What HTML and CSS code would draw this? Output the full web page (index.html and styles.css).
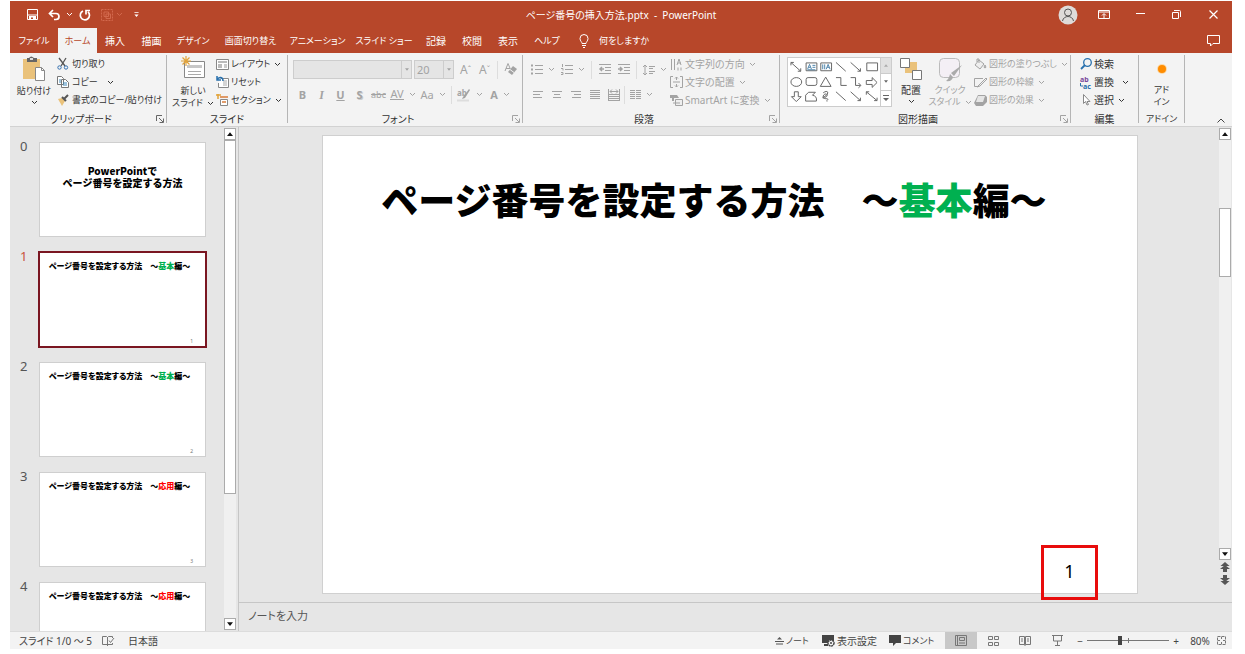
FILE: index.html
```html
<!DOCTYPE html>
<html lang="ja">
<head>
<meta charset="utf-8">
<meta name="viewport" content="width=device-width, initial-scale=1">
<title>ページ番号の挿入方法.pptx - PowerPoint</title>
<link rel="stylesheet" href="styles.css">
</head>
<body>
<svg class="defs" aria-hidden="true">
  <symbol id="chev" viewBox="0 0 7 5"><path d="M1 1l2.5 2.5L6 1" fill="none" stroke="currentColor"/></symbol>
  <symbol id="launch" viewBox="0 0 8 8"><path d="M.5 6V.5H6M3 3l4 4M7.500 3.500v4h-4" fill="none" stroke="currentColor"/></symbol>
  <symbol id="tri-up" viewBox="0 0 8 5"><path d="M0 5h8L4 0z" fill="currentColor"/></symbol>
  <symbol id="tri-down" viewBox="0 0 8 5"><path d="M0 0h8L4 5z" fill="currentColor"/></symbol>
</svg>
<div class="app">
  <header class="titlebar">
    <div class="quick">
      <button aria-label="上書き保存"><svg width="11" height="11" viewBox="0 0 11 11"><path d="M.5.5h10v10h-10zM1 6h9M3 10V8h5v2" fill="none" stroke="#fff"/><path d="M2 7h7v3H2z" fill="#fff"/><path d="M4 8.500h2V10H4z" fill="#b7472a"/></svg></button>
      <button aria-label="元に戻す"><svg width="13" height="12" viewBox="0 0 13 12"><path d="M5 1L1.500 4.500 5 8M2 4.500h6c4 0 4 6 0 6H6" fill="none" stroke="#fff" stroke-width="1.700"/></svg></button>
      <button aria-label="元に戻す一覧"><svg width="7" height="5"><use href="#chev"/></svg></button>
      <button class="wide" aria-label="繰り返し"><svg width="12" height="12" viewBox="0 0 12 12"><path d="M4 2a4.600 4.600 0 1 0 5 .8M7 5.500V1.500h4" fill="none" stroke="#fff" stroke-width="1.700"/></svg></button>
      <button class="dim" aria-label="グループ化"><svg width="12" height="12" viewBox="0 0 12 12"><path d="M.5.5h11v11H.5z" fill="none" stroke="currentColor" stroke-dasharray="2 1"/><path d="M3 3h4.500v4.500H3zM5 5h4.500v4.500H5z" fill="none" stroke="currentColor"/></svg></button>
      <button class="dim" aria-label="グループ一覧"><svg width="7" height="5"><use href="#chev"/></svg></button>
      <button class="wide" aria-label="カスタマイズ"><svg width="5" height="5" viewBox="0 0 5 6"><path d="M0 0h5v1H0zM0 3h5L2.500 6z" fill="#fff"/></svg></button>
    </div>
    <div class="doc-title">ページ番号の挿入方法.pptx&nbsp; -&nbsp; PowerPoint</div>
    <div class="window-buttons">
      <button aria-label="アカウント"><svg width="20" height="20" viewBox="0 0 20 20"><circle cx="10" cy="10" r="9.500" fill="#dedbd9"/><circle cx="10" cy="7.500" r="3.500" fill="none" stroke="#555"/><path d="M4.500 16c1-6 10-6 11 0" fill="none" stroke="#555"/></svg></button>
      <button aria-label="リボンの表示オプション"><svg width="12" height="9" viewBox="0 0 12 9"><path d="M.5.5h11v8H.5zM1 2h10M6 8V4M4 5.500l2-2 2 2" fill="none" stroke="#fff"/></svg></button>
      <button aria-label="最小化"><svg width="9" height="3"><path d="M0 .5h9" stroke="#fff"/></svg></button>
      <button aria-label="元のサイズに戻す"><svg width="9" height="9" viewBox="0 0 9 9"><path d="M.5 2.500h6v6h-6zM2 .5h5.500q1 0 1 1V7" fill="none" stroke="#fff"/></svg></button>
      <button aria-label="閉じる"><svg width="9" height="9" viewBox="0 0 9 9"><path d="M.5.5l8 8M8.500.5l-8 8" stroke="#fff" stroke-width="1.200"/></svg></button>
    </div>
  </header>
  <nav class="tabs">
    <button class="kana">ファイル</button><button class="active kana">ホーム</button><button>挿入</button><button>描画</button><button class="kana">デザイン</button><button class="kana">画面切り替え</button><button class="kana">アニメーション</button><button class="kana">スライド ショー</button><button>記録</button><button>校閲</button><button>表示</button><button class="kana">ヘルプ</button>
    <button class="tell kana"><svg width="10" height="14" viewBox="0 0 10 14"><path d="M3 9.500C3 8 1 7 1 4.500a4 4 0 0 1 8 0C9 7 7 8 7 9.500zM3 11.500h4M4 13.500h2" fill="none" stroke="#fff"/></svg>何をしますか</button>
    <button class="comment" aria-label="コメント"><svg width="13" height="12" viewBox="0 0 13 12"><path d="M.5.500h12v8H6L3.500 11V8.500h-3z" fill="none" stroke="#fff"/></svg></button>
  </nav>

  <section class="ribbon">
    <div class="group clipboard">
      <div class="body kana">
        <button class="big">
          <svg width="24" height="27" viewBox="0 0 24 27"><path d="M1 3h17v20H1z" fill="#eac27b"/><path d="M5 2h2q2-3 5 0h3v4H5z" fill="#666"/><path d="M8 2h3v2H8z" fill="#ddd"/><path d="M13.500 11.500h6l3 3v10h-9z" fill="#fff" stroke="#888"/><path d="M19.500 11.500v3h3" fill="none" stroke="#888"/></svg>
          <span>貼り付け</span><svg width="7" height="5"><use href="#chev"/></svg>
        </button>
        <div class="stack">
          <button><svg width="12" height="12" viewBox="0 0 12 12"><path d="M2 0l6 8M9 0L4 8" stroke="#555" stroke-width="1.300"/><circle cx="2.500" cy="9.500" r="1.700" fill="none" stroke="#3470b0"/><circle cx="9" cy="9.500" r="1.700" fill="none" stroke="#3470b0"/></svg>切り取り</button>
          <button><svg width="12" height="12" viewBox="0 0 12 12"><path d="M.5.500h4l2 2v6h-6zM4.500 3.500h4l3 3v5h-7z" fill="#fff" stroke="#777"/><path d="M6 7h4M6 9h4M2 4h2M2 6h2" stroke="#3d88bb"/></svg>コピー <svg class="gap-left" width="7" height="5"><use href="#chev"/></svg></button>
          <button><svg width="12" height="11" viewBox="0 0 12 11"><path d="M1 4l4-1 3 3-3 5z" fill="#eac27b"/><path d="M5 2l4 4M7 4l4-4" stroke="#555" stroke-width="2"/></svg>書式のコピー/貼り付け</button>
        </div>
      </div>
      <div class="caption">クリップボード<button aria-label="クリップボードの詳細"><svg width="8" height="8"><use href="#launch"/></svg></button></div>
    </div>

    <div class="group slides">
      <div class="body kana">
        <button class="big">
          <svg width="25" height="27" viewBox="0 0 25 27"><path d="M3.500 5.500h20v16h-20z" fill="#fff" stroke="#888"/><path d="M6 9h15v3H6z" fill="#c7c7c7"/><path d="M7 15.500h13M7 18.500h13" stroke="#aaa"/><path d="M5 0v10M0 5h10M1.500 1.500l7 7M8.500 1.500l-7 7" stroke="#e2a339" stroke-width="1.200"/></svg>
          <span>新しい</span><span class="inline">スライド <svg width="7" height="5"><use href="#chev"/></svg></span>
        </button>
        <div class="stack">
          <button><svg width="13" height="11" viewBox="0 0 13 11"><path d="M.5.500h12v10H.5z" fill="#fff" stroke="#888"/><path d="M2 2h9v2H2zM2 5h4v4H2z" fill="#bbb"/><path d="M8 6h3M8 8h3" stroke="#999"/></svg>レイアウト <svg width="7" height="5"><use href="#chev"/></svg></button>
          <button><svg width="13" height="12" viewBox="0 0 13 12"><path d="M4.500 2.500h8v9h-10V7" fill="#fff" stroke="#888"/><path d="M7 5h4M7 7h4M7 9h4" stroke="#aaa"/><path d="M1 0v4h4M1 4c2-4 6-3 6 1" fill="none" stroke="#2870ad" stroke-width="1.500"/></svg>リセット</button>
          <button><svg width="13" height="12" viewBox="0 0 13 12"><path d="M4.500 5.500h7v6h-7z" fill="#fff" stroke="#888"/><path d="M4 3h8M6 8h4" stroke="#d97c3a" stroke-width="1.500"/><path d="M0 1h5M2 0v5" stroke="#e2a339" stroke-width="1.500"/></svg>セクション <svg width="7" height="5"><use href="#chev"/></svg></button>
        </div>
      </div>
      <div class="caption">スライド</div>
    </div>

    <div class="group font disabled">
      <div class="body rows">
        <div class="row">
          <span class="combo name"><select aria-label="フォント"><option></option></select><i><svg width="4" height="3"><use href="#tri-down"/></svg></i></span>
          <span class="combo size"><select aria-label="フォント サイズ"><option>20</option></select><i><svg width="4" height="3"><use href="#tri-down"/></svg></i></span>
          <button class="cell grow">A<sup>ˆ</sup></button><button class="cell grow">A<sup>ˇ</sup></button><hr>
          <button class="cell" aria-label="書式のクリア"><svg width="13" height="13" viewBox="0 0 13 13"><path d="M1 8L4 .5l3 7M2 5.500h4" fill="none" stroke="currentColor"/><path d="M4 9l5-6 4 3-5 6z" fill="currentColor"/><path d="M6 6.500l4 3" stroke="#f3f3f3"/></svg></button>
        </div>
        <div class="row letters">
          <button class="cell"><b>B</b></button><button class="cell"><b class="serif"><em>I</em></b></button><button class="cell"><u><b>U</b></u></button><button class="cell shadow"><b>S</b></button><button class="cell small"><s>abc</s></button>
          <button class="pair"><span class="av">AV</span><svg width="7" height="5"><use href="#chev"/></svg></button>
          <button class="pair">Aa<svg width="7" height="5"><use href="#chev"/></svg></button><hr>
          <button class="pair"><svg width="14" height="14" viewBox="0 0 14 14"><text class="icon-letters" x="0" y="8">ab</text><path d="M12 1L6 9l-1 2 3-1 5-8z" fill="currentColor"/><path d="M0 12.500h12" stroke="#ddd" stroke-width="2"/></svg><svg width="7" height="5"><use href="#chev"/></svg></button>
          <button class="pair"><b>A</b><svg width="7" height="5"><use href="#chev"/></svg></button>
        </div>
      </div>
      <div class="caption">フォント<button aria-label="フォントの詳細"><svg width="8" height="8"><use href="#launch"/></svg></button></div>
    </div>

    <div class="group paragraph disabled">
      <div class="body">
        <div class="rows">
          <div class="row">
            <button class="pair" aria-label="箇条書き"><svg width="12" height="11" viewBox="0 0 12 11"><path d="M0 1.500h2M0 5.500h2M0 9.500h2" stroke="currentColor" stroke-width="2"/><path d="M4 1.500h8M4 5.500h8M4 9.500h8" stroke="currentColor"/></svg><svg width="7" height="5"><use href="#chev"/></svg></button>
            <button class="pair" aria-label="段落番号"><svg width="12" height="11" viewBox="0 0 12 11"><path d="M1.500 0v3M0 4.500h2v2M0 8.500h2v2H0M4 1.500h8M4 5.500h8M4 9.500h8" fill="none" stroke="currentColor"/></svg><svg width="7" height="5"><use href="#chev"/></svg></button><hr>
            <button class="cell" aria-label="インデントを減らす"><svg width="12" height="11" viewBox="0 0 12 11"><path d="M0 .5h12M6 3.500h6M6 6.500h6M0 9.500h12" stroke="currentColor"/><path d="M5 5H1M3 3L1 5l2 2" fill="none" stroke="currentColor" stroke-width="1.500"/></svg></button>
            <button class="cell" aria-label="インデントを増やす"><svg width="12" height="11" viewBox="0 0 12 11"><path d="M0 .5h12M6 3.500h6M6 6.500h6M0 9.500h12" stroke="currentColor"/><path d="M0 5h4M2 3l2 2-2 2" fill="none" stroke="currentColor" stroke-width="1.500"/></svg></button><hr>
            <button class="pair" aria-label="行間"><svg width="12" height="12" viewBox="0 0 12 12"><path d="M2 1v10M0 3l2-2 2 2M0 9l2 2 2-2M6 2.500h6M6 4.500h4M6 7.500h6M6 9.500h4" fill="none" stroke="currentColor"/></svg><svg width="7" height="5"><use href="#chev"/></svg></button>
          </div>
          <div class="row align">
            <button class="cell" aria-label="左揃え"><svg width="10" height="8"><path d="M0 .5h10M0 3.500h7M0 6.500h9" stroke="currentColor"/></svg></button>
            <button class="cell" aria-label="中央揃え"><svg width="10" height="8"><path d="M0 .5h10M2 3.500h6M1 6.500h8" stroke="currentColor"/></svg></button>
            <button class="cell" aria-label="右揃え"><svg width="10" height="8"><path d="M0 .5h10M3 3.500h7M1 6.500h9" stroke="currentColor"/></svg></button>
            <button class="cell" aria-label="両端揃え"><svg width="10" height="9"><path d="M0 .5h10M0 2.500h10M0 4.500h10M0 6.500h10M0 8.500h10" stroke="currentColor"/></svg></button>
            <button class="cell" aria-label="均等割り付け"><svg width="12" height="12" viewBox="0 0 12 12"><path d="M.5 0v12M11.500 0v12M2 2.500h8M4 .5l-2 2 2 2M8 .5l2 2-2 2M1 5.500h10M1 7.500h10M1 9.500h10M1 11.500h10" fill="none" stroke="currentColor"/></svg></button><hr>
            <button class="pair" aria-label="段組み"><svg width="11" height="9"><path d="M0 .5h5M6 .5h5M0 2.500h5M6 2.500h5M0 4.500h5M6 4.500h5M0 6.500h5M6 6.500h5M0 8.500h5M6 8.500h5" stroke="currentColor"/></svg><svg width="7" height="5"><use href="#chev"/></svg></button>
          </div>
        </div>
        <div class="stack">
          <button><svg width="13" height="13" viewBox="0 0 13 13"><path d="M1.500 1v11M4.500 1v11M7 7l2-6 2 6M8 5h3M8 9.500v3M11 9.500v3" fill="none" stroke="currentColor"/></svg>文字列の方向 <svg width="7" height="5"><use href="#chev"/></svg></button>
          <button><svg width="13" height="12" viewBox="0 0 13 12"><path d="M3 .5H.5v11H3M10 .5h2.500v11H10M3 6h7M6.500 1v3M5 2.500l1.500-1.500L8 2.500M6.500 11V8M5 9.500L6.500 11 8 9.500" fill="none" stroke="currentColor"/></svg>文字の配置 <svg width="7" height="5"><use href="#chev"/></svg></button>
          <button><svg width="13" height="12" viewBox="0 0 13 12"><path d="M0 1h7l2 3H4v3H2V4H0z" fill="currentColor"/><path d="M5.500 5.500h7v6h-7z" fill="#eee" stroke="currentColor"/><path d="M3 9h7" stroke="currentColor"/></svg>SmartArt に変換 <svg width="7" height="5"><use href="#chev"/></svg></button>
        </div>
      </div>
      <div class="caption">段落<button aria-label="段落の詳細"><svg width="8" height="8"><use href="#launch"/></svg></button></div>
    </div>

    <div class="group drawing">
      <div class="body">
        <div class="gallery">
          <svg width="92" height="48" viewBox="0 0 94 48" fill="none" stroke="#666" role="img" aria-label="図形">
            <path d="M3 4l10 9M3 7V4h3M13 10v3h-3M49 4l10 9M64 4l10 9M74 10v3h-3M80.500 4.500h11v8h-11z"/>
            <path d="M18.500 4.500h11v8h-11zM33.500 4.500h11v8h-11z"/><path d="M20 11l2-5 2 5M21 9h2M25 7h3M25 9h3M20 11.500h8M35.500 6v5M37.500 6v5M39 11l2-5 2 5M40 9h2" stroke="#4d83aa"/>
            <ellipse cx="8.500" cy="24" rx="5.500" ry="4.500"/><rect x="18.500" y="19.500" width="11" height="8" rx="2"/><path d="M33 28.500L38.500 19l5.500 9.500zM49 19.500h5v8h6M64 19.500h5v8h5M72 25l2.500 2.500L72 30M80 22.500h6v-3l5 5-5 5v-3h-6z"/>
            <path d="M6.500 34v5h-3L8.500 44l5-5h-3v-5zM21 34.500h7l-3 3q5 1 4 6H18v-6zM36 35c6-4 6 2 1 4-5 3 4 1 3-2-2-3-7 3-2 4 6 0 0 2 2 3M49 34l10 9M64 34l10 9M74 40v3h-3M80 34l11 9M80 37v-3h3M91 40v3h-3"/>
          </svg>
          <div class="gallery-nav"><button disabled aria-label="前へ"><svg width="4" height="3"><use href="#tri-up"/></svg></button><button aria-label="次へ"><svg width="4" height="3"><use href="#tri-down"/></svg></button><button aria-label="その他"><svg width="6" height="6" viewBox="0 0 6 6"><path d="M0 0h6v1H0zM0 3h6L3 6z" fill="#666"/></svg></button></div>
        </div>
        <button class="big arrange">
          <svg width="24" height="26" viewBox="0 0 24 26"><path d="M6 6h12v11H6z" fill="#eac27b"/><path d="M1.500 2.500h9v9h-9zM13.500 14.500h9v9h-9z" fill="#fff" stroke="#777"/></svg>
          <span>配置</span><svg width="7" height="5"><use href="#chev"/></svg>
        </button>
        <button class="big quick-style disabled kana">
          <svg width="25" height="26" viewBox="0 0 25 26"><rect x="1.500" y="2.500" width="20" height="19" rx="4" fill="#f4eff5" stroke="#bbb"/><path d="M24 9l-8 11-3-3zM12 18l3 3q-1 5-7 4 3-2 4-7z" fill="#aaa"/></svg>
          <span>クイック</span><span class="inline">スタイル <svg width="7" height="5"><use href="#chev"/></svg></span>
        </button>
        <div class="stack disabled kana">
          <button><svg width="13" height="11" viewBox="0 0 13 11"><path d="M5 1l5 4-4 5-5-4zM5 4V0H3v3M11 6q2 3 0 3t0-3" fill="#eee" stroke="currentColor"/></svg>図形の塗りつぶし <svg width="7" height="5"><use href="#chev"/></svg></button>
          <button><svg width="13" height="11" viewBox="0 0 13 11"><path d="M9 1.500H.5v8H3M12 1L5 8l-2 2 3-1 7-7z" fill="none" stroke="currentColor"/></svg>図形の枠線 <svg width="7" height="5"><use href="#chev"/></svg></button>
          <button><svg width="13" height="11" viewBox="0 0 13 11"><path d="M4 0h7l2 2v5l-4 4H2L0 8z" fill="currentColor"/><path d="M4 1h7l-2 6H2z" fill="#e5e5e5"/></svg>図形の効果 <svg width="7" height="5"><use href="#chev"/></svg></button>
        </div>
      </div>
      <div class="caption">図形描画<button class="disabled" aria-label="図形描画の詳細"><svg width="8" height="8"><use href="#launch"/></svg></button></div>
    </div>

    <div class="group editing">
      <div class="body">
        <div class="stack">
          <button><svg width="12" height="12" viewBox="0 0 12 12"><circle cx="7.500" cy="4.500" r="3.800" fill="none" stroke="#2870ad" stroke-width="1.300"/><path d="M5 7l-4 4" stroke="#2870ad" stroke-width="1.800"/></svg>検索</button>
          <button><svg width="12" height="13" viewBox="0 0 12 13"><text class="icon-letters purple" x="0" y="6">ab</text><text class="icon-letters blue" x="3" y="13">ac</text><path d="M.5 7v3H3" fill="none" stroke="#2870ad"/></svg>置換 <svg class="gap-left" width="7" height="5"><use href="#chev"/></svg></button>
          <button><svg width="12" height="12" viewBox="0 0 12 12"><path d="M3.500.5v9l2-2 1.500 3.500 1.500-.5L7 7.500h3z" fill="#fff" stroke="#888"/></svg>選択 <svg width="7" height="5"><use href="#chev"/></svg></button>
        </div>
      </div>
      <div class="caption">編集</div>
    </div>

    <div class="group addins">
      <div class="body kana">
        <button class="big"><svg width="20" height="26"><circle cx="10" cy="13" r="5" fill="#fbd9a8"/><circle cx="10" cy="13" r="4" fill="#ff8c00"/></svg><span>アド</span><span>イン</span></button>
      </div>
      <div class="caption kana">アドイン</div>
    </div>
    <button class="collapse" aria-label="リボンを折りたたむ"><svg width="8" height="5" viewBox="0 0 8 5"><path d="M.5 4.500L4 1l3.500 3.500" fill="none" stroke="#444"/></svg></button>
  </section>

  <main class="workspace">
    <aside class="panel">
      <ol class="thumbs">
        <li><span>0</span><div class="thumb cover"><p>PowerPointで<br>ページ番号を設定する方法</p></div></li>
        <li class="current"><span>1</span><div class="thumb"><p>ページ番号を設定する方法　～<b class="green">基本</b>編～</p><small>1</small></div></li>
        <li><span>2</span><div class="thumb"><p>ページ番号を設定する方法　～<b class="green">基本</b>編～</p><small>2</small></div></li>
        <li><span>3</span><div class="thumb"><p>ページ番号を設定する方法　～<b class="red">応用</b>編～</p><small>3</small></div></li>
        <li><span>4</span><div class="thumb"><p>ページ番号を設定する方法　～<b class="red">応用</b>編～</p></div></li>
      </ol>
      <div class="scroll left">
        <button aria-label="上へ"><svg width="6" height="4"><use href="#tri-up"/></svg></button>
        <div class="track"><div class="handle"></div></div>
        <button aria-label="下へ"><svg width="6" height="4"><use href="#tri-down"/></svg></button>
      </div>
    </aside>
    <div class="editor">
      <div class="stage">
        <article class="slide">
          <h1>ページ番号を設定する方法　～<span class="green">基本</span>編～</h1>
          <div class="page-number">1</div>
        </article>
        <div class="scroll right">
          <button aria-label="上へ"><svg width="6" height="4"><use href="#tri-up"/></svg></button>
          <div class="track"><div class="handle"></div></div>
          <button aria-label="下へ"><svg width="6" height="4"><use href="#tri-down"/></svg></button>
          <button class="jump" aria-label="前のスライド"><svg width="10" height="10" viewBox="0 0 10 10"><path d="M5 0l4.500 4h-9zM5 3l5 4H7v3H3V7H0z" fill="#555"/></svg></button>
          <button class="jump" aria-label="次のスライド"><svg width="10" height="10" viewBox="0 0 10 10"><path d="M5 10L.5 6h9zM5 7L0 3h3V0h4v3h3z" fill="#555"/></svg></button>
        </div>
      </div>
      <div class="notes">ノートを入力</div>
    </div>
  </main>

  <footer class="status">
    <span class="count">スライド 1/0 ～ 5</span>
    <button class="proof" aria-label="校正"><svg width="12" height="11" viewBox="0 0 12 11"><path d="M5.500 9.500H.5v-8h4l1 1 1-1h4V3M5.500 2v9M5.500 9.500h5V8M7 5.500l1.500 2L12 3" fill="none" stroke="#777"/></svg></button>
    <span>日本語</span>
    <div class="views">
      <button class="note-button kana"><svg width="9" height="9" viewBox="0 0 9 9"><path d="M2 3.500h5L4.500 1z" fill="#555"/><path d="M0 5.500h9M1 8h7" stroke="#555"/></svg>ノート</button>
      <button class="display-button"><svg width="13" height="12" viewBox="0 0 13 12"><path d="M0 0h12v8H0zM2 9h4v2H2z" fill="#444"/><circle cx="9" cy="8" r="3" fill="#f3f3f3" stroke="#444" stroke-width="1.500" stroke-dasharray="2 .5"/><circle cx="9" cy="8" r="1" fill="#444"/></svg>表示設定</button>
      <button class="comment-button kana"><svg width="12" height="11" viewBox="0 0 12 11"><path d="M0 0h12v8H7l-3 3V8H0z" fill="#444"/></svg>コメント</button>
      <button class="view selected" aria-label="標準"><svg width="12" height="11" viewBox="0 0 12 11"><path d="M.5.5h11v10H.5zM2.500 1v9M4.500 2.500h5v3h-5zM4 8h6" fill="none" stroke="#777"/></svg></button>
      <button class="view" aria-label="スライド一覧"><svg width="11" height="10" viewBox="0 0 11 10"><path d="M.5.5h4v3h-4zM6.500.5h4v3h-4zM.5 6.500h4v3h-4zM6.500 6.500h4v3h-4z" fill="none" stroke="#777"/></svg></button>
      <button class="view" aria-label="閲覧表示"><svg width="12" height="10" viewBox="0 0 12 10"><path d="M.5.5h5v8h-5zM6.500.5h5v8h-5zM6 1v9M2 3h2M2 5h2M8 3h2M8 5h2" fill="none" stroke="#777"/></svg></button>
      <button class="view" aria-label="スライドショー"><svg width="11" height="11" viewBox="0 0 11 11"><path d="M0 .5h11M1.500 1v5h8V1M5.500 6v4M3 10.500h5" fill="none" stroke="#777"/></svg></button>
      <button class="zoom-step" aria-label="縮小">−</button>
      <input type="range" min="0" max="100" value="40" aria-label="ズーム">
      <button class="zoom-step" aria-label="拡大">+</button>
      <button class="percent">80%</button>
      <button class="fit" aria-label="ウィンドウに合わせる"><svg width="9" height="9" viewBox="0 0 9 9"><path d="M.5.5h8v8h-8zM4.500 1v2M4.500 6v2M1 4.500h2M6 4.500h2" fill="none" stroke="#777" stroke-dasharray="3 1"/></svg></button>
    </div>
  </footer>
</div>
</body>
</html>
```
FILE: styles.css
```css
* { box-sizing: border-box; }
body {
  margin: 0;
  background: #fff;
  color: #333;
  font: 10px/12px "Noto Sans", "Noto Sans CJK JP", sans-serif;
}
button, select { border: 0; padding: 0; margin: 0; background: none; color: inherit; font: inherit; white-space: nowrap; font-feature-settings: "palt"; }
svg { flex: none; overflow: visible; }
.defs { position: absolute; width: 0; height: 0; }
.kana { font-size: 9px; }
.app {
  display: flex;
  flex-direction: column;
  height: 100vh;
  padding: 1px 13px 5px 10px;
  font-feature-settings: "palt";
}

.titlebar {
  display: grid;
  grid-template-columns: 1fr auto 1fr;
  align-items: center;
  height: 27px;
  background: #b7472a;
  color: #fff;
}
.titlebar button { display: flex; align-items: center; justify-content: center; }
.quick { display: flex; padding-left: 12px; }
.quick button { width: 20px; }
.quick button:nth-child(2) { width: 25px; }
.quick button:nth-child(3) { width: 4px; }
.quick .wide { width: 27px; }
.quick .wide + .dim { width: 17px; }
.quick .dim + .dim { width: 8px; }
.quick .dim { color: #d2694d; }
.window-buttons { display: flex; justify-content: flex-end; }
.window-buttons button { width: 36px; height: 26px; }
.window-buttons button:last-child { width: 38px; }

.tabs {
  display: grid;
  grid-template-columns: 48px 39px 36px 37px 46px 69px 65px 68px 36px 36px 36px 42px 1fr auto;
  height: 25px;
  background: #b7472a;
  color: #fff;
}
.tabs .active { background: #f3f3f3; color: #b7472a; }
.tabs .tell { display: flex; align-items: center; gap: 10px; padding-left: 11px; }
.comment { display: flex; align-items: center; justify-content: center; width: 38px; }

.ribbon {
  display: flex;
  height: 74px;
  padding-top: 2px;
  background: #f3f3f3;
  border-bottom: 1px solid #d2d2d2;
}
.group { display: flex; flex-direction: column; margin-bottom: 3px; border-right: 1px solid #b5b5b5; }
.clipboard { width: 157px; }
.slides { width: 121px; }
.font { width: 235px; }
.paragraph { width: 257px; }
.drawing { width: 291px; }
.editing { width: 68px; }
.addins { width: 46px; }
.body { display: flex; height: 54px; }
.disabled { color: #a3a3a3; }
.caption { position: relative; height: 14px; line-height: 20px; color: #333; text-align: center; }
.caption button { position: absolute; right: 2px; bottom: 0; display: flex; color: #666; }
.font .caption button, .paragraph .caption button, .drawing .caption button { color: #a3a3a3; }
.clipboard .caption, .paragraph .caption, .drawing .caption, .font .caption { padding-right: 14px; }
.big { display: flex; flex-direction: column; align-items: center; text-align: center; }
.big > svg:first-child { margin: 1px 0 2px; }
.big > span + svg { margin-top: 3px; }
.inline { display: flex; align-items: center; gap: 4px; }
.clipboard .big { width: 46px; }
.clipboard .body { padding-left: 1px; }
.slides .body { padding-left: 5px; }
.slides .big { width: 42px; margin-right: 2px; }
.stack { display: flex; flex-direction: column; }
.stack button { display: flex; align-items: center; gap: 2px; height: 18px; }
.stack button svg + svg { margin-left: 2px; }
.clipboard .stack button { gap: 3px; }
.stack .gap-left { margin-left: 6px; }
.rows { display: flex; flex-direction: column; gap: 4px; padding-top: 4px; }
.row { display: flex; align-items: center; height: 21px; }
.row hr { width: 1px; height: 18px; margin: 0 3px; border: 0; background: #ddd; }
.cell { display: flex; align-items: center; justify-content: center; width: 19px; height: 20px; }
.cell sup { font-size: 8px; line-height: 8px; }
.grow { font-size: 12px; }
.serif { font-family: "Liberation Serif", serif; font-size: 12px; }
.pair { display: flex; align-items: center; justify-content: center; gap: 5px; width: 30px; height: 20px; }
.font .rows { padding-left: 5px; }
.letters { font-size: 11px; }
.small { font-size: 9px; }
.shadow { text-shadow: 1px 1px #ccc; }
.av { border-bottom: 1px solid; line-height: 10px; }
.combo { display: flex; height: 19px; margin-right: 2px; border: 1px solid #cdcdcd; background: #e5e5e5; }
.combo select { flex: 1; min-width: 0; padding-left: 2px; appearance: none; font-size: 11px; }
.combo i { display: flex; align-items: center; justify-content: center; width: 10px; border-left: 1px solid #cdcdcd; }
.name { width: 119px; }
.size { width: 40px; }
.paragraph .body { padding-left: 5px; }
.paragraph .rows { width: 142px; }
.paragraph .align hr { margin: 0 1px; }
.drawing .body { padding-left: 7px; }
.gallery { display: flex; height: 50px; margin-top: 2px; border: 1px solid #ccc; background: #fff; }
.gallery-nav { display: flex; flex-direction: column; width: 11px; border-left: 1px solid #ccc; color: #666; }
.gallery-nav button { display: flex; flex: 1; align-items: center; justify-content: center; }
.gallery-nav button + button { border-top: 1px solid #ccc; }
.gallery-nav button:disabled { background: #e1e1e1; color: #aaa; }
.arrange { width: 38px; }
.quick-style { width: 40px; margin-right: 4px; }
.editing .body { padding-left: 9px; }
.addins .big { width: 45px; }
.collapse { align-self: flex-end; width: 14px; height: 14px; margin-left: auto; margin-right: 4px; }
.icon-letters { font: bold 8px "Noto Sans", sans-serif; fill: currentColor; }
.editing .icon-letters { font-size: 7px; }
.icon-letters.purple { fill: #79489b; }
.icon-letters.blue { fill: #2870ad; }

.workspace { display: flex; flex: 1; min-height: 0; background: #e6e6e6; }
.panel { display: flex; width: 229px; border-right: 1px solid #c6c6c6; }
.thumbs { flex: 1; margin: 0; padding: 15px 0 0 10px; overflow: hidden; list-style: none; }
.thumbs li { display: flex; height: 110px; color: #555; font-size: 13px; line-height: 8px; }
.thumbs li > span { width: 19px; }
.thumb {
  position: relative;
  width: 167px;
  height: 95px;
  border: 1px solid #cfcfcf;
  background: #fff;
  color: #000;
  text-align: center;
}
.thumb p { margin: 7px 0 0; padding-right: 6px; font: 900 8px/12px "Noto Sans CJK JP", sans-serif; font-feature-settings: "palt"; }
.thumb b { font-weight: inherit; }
.thumb small { position: absolute; right: 12px; bottom: 2px; color: #777; font-size: 5px; line-height: 6px; }
.thumb.cover p { margin: 22px 0 0; padding: 0; font-size: 10px; font-feature-settings: normal; }
.current > span { color: #c8533c; }
.current .thumb { outline: 2px solid #7a1621; outline-offset: -1px; }
.green { color: #00b050; }
.red { color: #f00; }
.scroll { display: flex; flex-direction: column; align-items: stretch; width: 12px; padding-top: 1px; }
.scroll button { display: flex; align-items: center; justify-content: center; height: 12px; border: 1px solid #ababab; background: #fff; color: #111; }
.scroll .jump { height: 13px; border: 0; background: none; }
.track { flex: 1; background: #f0f0f0; }
.handle { border: 1px solid #ababab; background: #fff; }
.left { margin-right: 2px; padding-bottom: 1px; }
.left .handle { height: 74%; }
.right { margin: 0 1px 0 auto; padding-bottom: 16px; }
.right .track { display: flex; flex-direction: column; }
.right .handle { height: 17%; margin-top: 68px; }

.editor { display: flex; flex: 1; flex-direction: column; min-width: 0; }
.stage { display: flex; flex: 1; align-items: flex-start; min-height: 0; padding-left: 83px; }
.stage .right { align-self: stretch; }
.slide {
  position: relative;
  flex: 1;
  aspect-ratio: 16 / 9;
  margin: 8px 81px 0 0;
  border: 1px solid #d0d0d0;
  background: #fff;
  color: #000;
}
.slide h1 {
  margin: 36px 0 0;
  padding-right: 32px;
  font: 900 37px/54px "Noto Sans CJK JP", sans-serif;
  font-feature-settings: normal;
  text-align: center;
  white-space: nowrap;
}
.page-number {
  position: absolute;
  right: 39px;
  bottom: -7px;
  width: 57px;
  height: 55px;
  border: 3px solid #e80c0c;
  font-size: 18px;
  line-height: 47px;
  text-align: center;
}
.notes { height: 29px; padding: 6px 9px; border-top: 1px solid #c6c6c6; color: #555; font-size: 11px; line-height: 14px; }

.status { display: flex; align-items: center; height: 18px; padding-left: 9px; border-top: 1px solid #dcdcdc; background: #f3f3f3; color: #444; }
.count { width: 83px; white-space: nowrap; }
.proof { display: flex; width: 26px; }
.views { display: flex; align-items: center; height: 17px; margin-left: auto; }
.views button { display: flex; align-items: center; gap: 2px; }
.note-button { width: 47px; }
.display-button { width: 67px; }
.comment-button { width: 56px; }
.views .view { justify-content: center; width: 32px; height: 17px; }
.views .selected { background: #c8c8c8; }
.views .zoom-step { justify-content: center; width: 14px; }
.views input {
  width: 82px;
  height: 10px;
  margin: 0;
  appearance: none;
  background: linear-gradient(#777, #777) center / 100% 1px no-repeat, linear-gradient(#777, #777) center / 1px 5px no-repeat;
}
.views input::-webkit-slider-thumb { width: 4px; height: 9px; appearance: none; background: #444; }
.views .percent { justify-content: center; width: 34px; }
.fit { width: 15px; }
```
